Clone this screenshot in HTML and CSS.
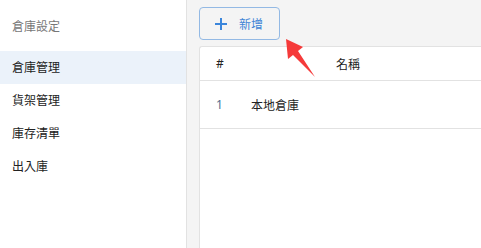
FILE: index.html
```html
<!DOCTYPE html>
<html lang="zh-Hant">
<head>
  <meta charset="UTF-8">
  <meta name="viewport" content="width=device-width, initial-scale=1.0">
  <title>倉庫管理</title>
  <link rel="stylesheet" href="styles.css">
</head>
<body>

<div class="layout">
  <aside class="sidebar">
    <div class="side-title">倉庫設定</div>
    <div class="side-item active">倉庫管理</div>
    <div class="side-item">貨架管理</div>
    <div class="side-item">庫存清單</div>
    <div class="side-item">出入庫</div>
  </aside>

  <main class="main">
    <button class="add-btn">
      <svg class="plus" width="12" height="12" viewBox="0 0 12 12">
        <path d="M6 0V12M0 6H12" stroke="currentColor" stroke-width="2"/>
      </svg>
      <span>新增</span>
    </button>

    <section class="card">
      <div class="row head">
        <div class="col-no">#</div>
        <div class="col-name name-head">名稱</div>
      </div>
      <div class="row item">
        <div class="col-no num">1</div>
        <div class="col-name">本地倉庫</div>
      </div>
    </section>
  </main>
</div>

<!-- annotation arrow -->
<svg class="arrow" width="481" height="248" viewBox="0 0 481 248">
  <polygon points="286,39 303,47 298,51 315,77 293,55 288,59" fill="#f53a3a"/>
</svg>

</body>
</html>
```

FILE: styles.css
```css
body {
  margin: 0;
  font-family: "Noto Sans", "Noto Sans CJK TC", sans-serif;
  font-size: 12px;
  color: #222;
  background-color: #f4f4f4;
}

.layout {
  display: flex;
  height: 248px;
}

.sidebar {
  width: 186px;
  background-color: white;
  border-right: 1px solid #e2e2e2;
  padding-top: 10px;
}

.side-title {
  height: 33px;
  line-height: 33px;
  padding-left: 12px;
  margin-bottom: 8px;
  color: #777;
}

.side-item {
  height: 33px;
  line-height: 33px;
  padding-left: 12px;
}

.side-item.active {
  background-color: #ebf2fa;
}

.main {
  flex: 1;
  padding: 7px 0 0 12px;
  display: flex;
  flex-direction: column;
  align-items: flex-start;
}

.add-btn {
  display: flex;
  align-items: center;
  gap: 12px;
  height: 33px;
  width: 81px;
  padding: 0 0 0 15px;
  border: 1px solid #93b9e4;
  border-radius: 4px;
  background: transparent;
  color: #3f84d6;
  font-family: inherit;
  font-size: 12px;
}

.plus {
  color: #3b86db;
}

.card {
  margin-top: 6px;
  align-self: stretch;
  flex: 1;
  background-color: white;
  border: 1px solid #e2e2e2;
  border-right: none;
  border-bottom: none;
  border-top-left-radius: 3px;
}

.row {
  display: flex;
  align-items: center;
  border-bottom: 1px solid #e2e2e2;
}

.row.head {
  height: 33px;
}

.row.item {
  height: 47px;
}

.col-no {
  width: 35px;
  padding-left: 16px;
}

.num {
  color: #4f6f90;
}

.name-head {
  padding-left: 85px;
}

.arrow {
  position: absolute;
  top: 0;
  left: 0;
  pointer-events: none;
}
```
